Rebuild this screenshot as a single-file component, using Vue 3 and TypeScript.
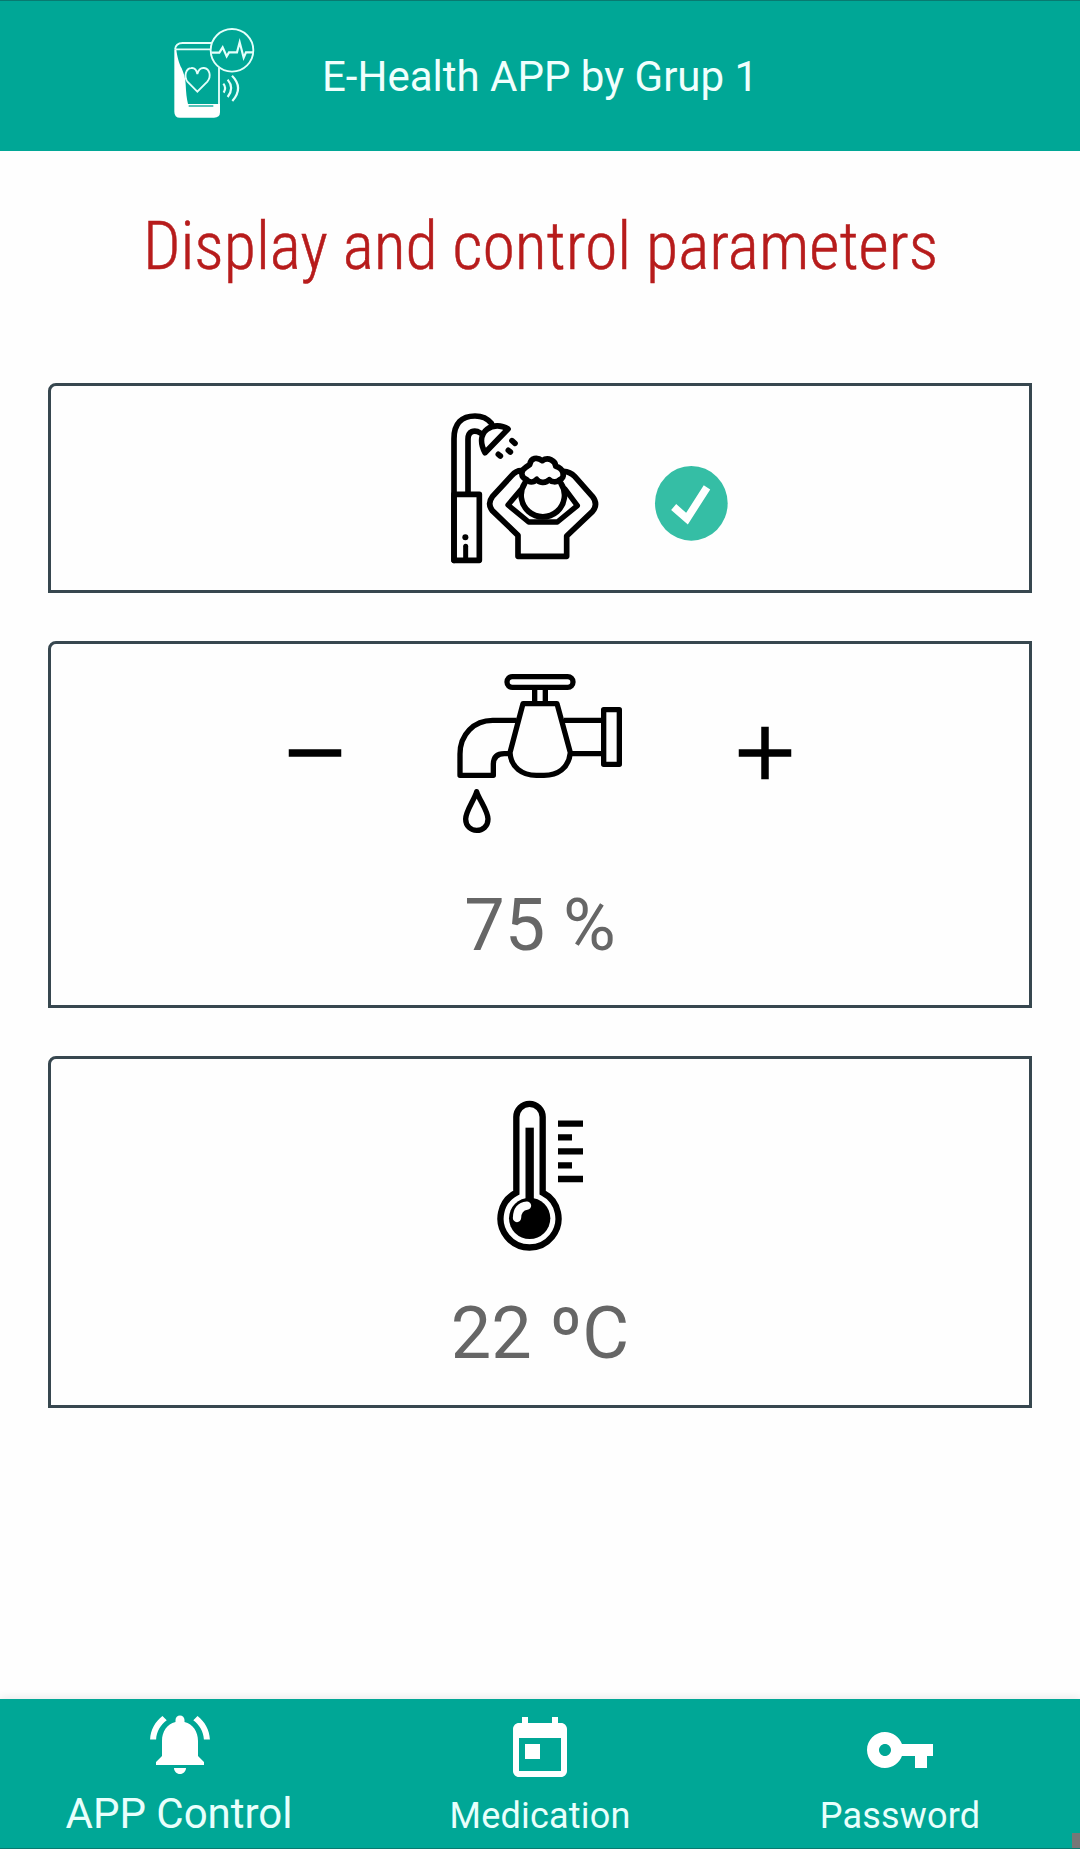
<script setup lang="ts">
import { ref } from 'vue'

interface NavItem {
  id: string
  label: string
  path: string
}

const navItems: NavItem[] = [
  {
    id: 'control',
    label: 'APP Control',
    path: 'M7.58 4.08L6.15 2.65C3.75 4.48 2.17 7.3 2.03 10.5h2c.15-2.65 1.51-4.97 3.55-6.42zm12.39 6.42h2c-.15-3.2-1.73-6.02-4.12-7.85l-1.42 1.43c2.02 1.45 3.39 3.77 3.54 6.42zM18 11c0-3.07-1.64-5.64-4.5-6.32V4c0-.83-.67-1.5-1.5-1.5s-1.5.67-1.5 1.5v.68C7.63 5.36 6 7.92 6 11v5l-2 2v1h16v-1l-2-2v-5zm-6 11c1.1 0 2-.9 2-2h-4c0 1.1.89 2 2 2z',
  },
  {
    id: 'medication',
    label: 'Medication',
    path: 'M19 3h-1V1h-2v2H8V1H6v2H5c-1.11 0-1.99.9-1.99 2L3 19c0 1.1.89 2 2 2h14c1.1 0 2-.9 2-2V5c0-1.1-.9-2-2-2zm0 16H5V8h14v11zM7 10h5v5H7z',
  },
  {
    id: 'password',
    label: 'Password',
    path: 'M12.65 10C11.83 7.67 9.61 6 7 6c-3.31 0-6 2.69-6 6s2.69 6 6 6c2.61 0 4.83-1.67 5.65-4H17v4h4v-4h2v-4H12.65zM7 14c-1.1 0-2-.9-2-2s.9-2 2-2 2 .9 2 2-.9 2-2 2z',
  },
]

const active = ref('control')
const waterLevel = ref(75)
const temperature = ref(22)

function changeWater(step: number): void {
  waterLevel.value = Math.min(100, Math.max(0, waterLevel.value + step))
}
</script>

<template>
  <div class="app">
    <header class="bar">
      <svg class="logo" viewBox="39 36 246 276" fill="none" stroke="#e4fffb" stroke-width="5.5">
        <path d="M45 104 C46 91 54 84 68 84 H156 M46 103 H151 M177 157 V268" />
        <path d="M43 104 H49 C51 122 57 145 65 160 C71 175 76 188 77 208 C78 232 80 252 84 267 H180 V292 Q180 308 162 308 H60 Q43 308 43 290 Z" fill="#fff" stroke="none" />
        <path d="M86 273 H160" stroke="#00a796" stroke-width="4" />
        <path d="M112 230 L83 201 C70 184 78 160 94 159 C104 158 110 166 112 177 C115 165 122 158 132 159 C149 161 155 184 142 200 Z" />
        <circle cx="216" cy="106" r="64" />
        <path d="M154 113 H178 L188 97 L200 124 L207 112 H231 L239 82 L251 128 L258 112 H280" stroke-width="6.5" />
        <path d="M190 206 Q200 218 191 233 M203 194 Q224 219 203 246 M216 182 Q252 218 217 258" stroke-width="6.5" />
      </svg>
      <span class="app-name">E-Health APP by Grup 1</span>
    </header>

    <main class="content">
      <h1 class="title">Display and control parameters</h1>

      <section class="card shower">
        <svg class="shower-icon" viewBox="60 50 450 456" fill="none" stroke="#000" stroke-width="17" stroke-linejoin="round" stroke-linecap="round">
          <path d="M72 495 V130 C72 84 96 62 135 62 C157 62 173 70 184 84 M114 294 V132 C114 108 133 101 151 113" />
          <path d="M165 172 L234 101 C194 75 130 105 165 172 Z M72 297 H148 V495 H72 Z" />
          <path d="M107 453 V490" stroke-width="15" />
          <path d="M106 426 h.1" stroke-width="18" />
          <path d="M246 136 L255 144 M235 165 L241 170 M205 177 L211 182" stroke-width="17" />
          <path d="M275 226 C260 225 253 232 245 241 L187 304 Q171 325 187 346 L264 420 V483 H410 V422 L487 349 Q506 327 487 303 L434 243 Q421 229 400 228" />
          <path d="M284 264 A65 65 0 1 0 393 264" />
          <path d="M289 252 C271 246 272 225 286 217 L299 208 C303 187 321 184 337 196 C354 184 377 196 377 213 C402 219 407 248 389 253 C379 263 365 260 358 253 C346 266 327 262 320 252 C310 263 297 262 289 252 Z" />
          <path d="M272 284 L234 329 L296 380 H382 L442 331 L405 281" stroke-width="16" />
        </svg>
        <svg class="check-icon" viewBox="672 210 225 231">
          <ellipse cx="784" cy="325" rx="109" ry="112" fill="#35bea5" />
          <path d="M731 336 L771 371 L831 277" fill="none" stroke="#fff" stroke-width="23" />
        </svg>
      </section>

      <section class="card water">
        <div class="water-row">
          <button class="step" type="button" aria-label="Decrease" @click="changeWater(-5)">
            <svg viewBox="0 0 24 24"><path d="M19 13H5v-2h14v2z" /></svg>
          </button>
          <svg class="faucet-icon" viewBox="48 39 501 483" fill="none" stroke="#000" stroke-width="16" stroke-linejoin="round">
            <rect x="201" y="50" width="198" height="32" rx="16" />
            <path d="M284 86 V128 M316 86 V128 M249 131 H351 L391 278 C386 326 352 346 312 346 H289 C246 346 213 322 210 278 Z" />
            <path d="M230 181 H158 C102 181 60 223 60 282 V346 H160 V314 Q160 281 193 281 H210 M372 181 H488 M394 281 H488 M491 149 H538 V313 H491 Z" />
            <path d="M110 395 C104 418 77 453 77 477 C77 499 93 511 110 511 C128 511 144 499 144 477 C144 453 117 418 110 395 Z" />
          </svg>
          <button class="step" type="button" aria-label="Increase" @click="changeWater(5)">
            <svg viewBox="0 0 24 24"><path d="M19 13h-6v6h-2v-6H5v-2h6V5h2v6h6v2z" /></svg>
          </button>
        </div>
        <p class="value">{{ waterLevel }} %</p>
      </section>

      <section class="card temperature">
        <svg class="thermo-icon" viewBox="171 30 261 456" fill="none" stroke="#000">
          <path d="M229 308 V81 A39.5 39.5 0 0 1 308 81 V308 A87 87 0 1 1 229 308 Z" stroke-width="19" />
          <path d="M269 113 V340" stroke-width="25" />
          <circle cx="269" cy="385" r="62" fill="#000" stroke="none" />
          <path d="M231 384 Q232 350 261 347" stroke="#fff" stroke-width="25" stroke-linecap="round" />
          <path d="M354 101 H429 M354 142 H396 M354 184 H429 M354 226 H396 M354 267 H429" stroke-width="19" />
        </svg>
        <p class="value">{{ temperature }} ºC</p>
      </section>
    </main>

    <nav class="tabs">
      <a v-for="item in navItems" :key="item.id" class="tab" :class="{ active: item.id === active }" @click="active = item.id">
        <svg class="tab-icon" viewBox="0 0 24 24"><path :d="item.path" /></svg>
        <span class="tab-label">{{ item.label }}</span>
      </a>
      <i class="corner"></i>
    </nav>
  </div>
</template>

<style>
body {
  margin: 0;
  background: #fefefe;
}
</style>

<style scoped>
.app {
  display: flex;
  flex-direction: column;
  width: 1080px;
  height: 1849px;
  overflow: hidden;
  background: #fefefe;
  font-family: Roboto, "Liberation Sans", sans-serif;
}
svg {
  display: block;
  flex: none;
}
.bar {
  box-sizing: border-box;
  display: flex;
  flex: none;
  align-items: flex-start;
  height: 151px;
  padding: 26px 0 0 173px;
  background: #00a796;
  border-top: 1px solid #087a70;
}
.logo {
  width: 82px;
  height: 92px;
}
.app-name {
  margin: 25px 0 0 67px;
  color: #f0fffd;
  font-size: 42px;
  line-height: 49px;
  white-space: nowrap;
}
.content {
  display: flex;
  flex: 1;
  flex-direction: column;
  padding: 0 48px;
}
.title {
  height: 77px;
  margin: 57px -1px 98px 0;
  color: #b71c1c;
  font-family: "Roboto Condensed", Roboto, sans-serif;
  font-size: 66px;
  font-stretch: 75%;
  font-weight: 300;
  letter-spacing: -0.04px;
  line-height: 77px;
  text-align: center;
  white-space: nowrap;
  -webkit-text-stroke: 0.5px #b71c1c;
}
.card {
  box-sizing: border-box;
  display: flex;
  flex: none;
  border: 3px solid #37474f;
  border-radius: 8px 0 0 0;
  background: #fefefe;
}
.card + .card {
  margin-top: 48px;
}
.shower {
  height: 210px;
  padding: 26px 0 0 399px;
}
.shower-icon {
  width: 150px;
  height: 152px;
}
.check-icon {
  width: 75px;
  height: 77px;
  margin: 53px 0 0 54px;
}
.water {
  flex-direction: column;
  align-items: center;
  height: 367px;
  padding-top: 29px;
}
.water-row {
  display: flex;
  justify-content: space-between;
  width: 540px;
}
.step {
  width: 90px;
  height: 90px;
  margin-top: 35px;
  padding: 0;
  border: 0;
  background: none;
}
.faucet-icon {
  width: 167px;
  height: 161px;
  margin-right: 2px;
}
.value {
  margin: 0;
  color: #666;
  font-size: 72px;
  line-height: 84px;
}
.water .value {
  margin-top: 50px;
}
.temperature {
  flex-direction: column;
  align-items: center;
  height: 352px;
  padding-top: 41px;
}
.thermo-icon {
  width: 87px;
  height: 152px;
}
.temperature .value {
  margin-top: 40px;
}
.tabs {
  box-sizing: border-box;
  position: relative;
  display: flex;
  flex: none;
  height: 150px;
  background: #00a796;
  border-bottom: 1px solid #087a70;
  box-shadow: 0 -2px 8px rgba(0, 0, 0, 0.08);
}
.tab {
  display: flex;
  flex: 1;
  flex-direction: column;
  align-items: center;
  padding-top: 15px;
}
.tab.active {
  padding-top: 9px;
}
.tab-icon {
  width: 72px;
  height: 72px;
  fill: #fff;
}
.tab-label {
  margin-top: 9px;
  color: #e8fffc;
  font-size: 36px;
  letter-spacing: 0.2px;
  line-height: 42px;
  white-space: nowrap;
}
.active .tab-label {
  margin-left: -2px;
  font-size: 42px;
  letter-spacing: 0;
  line-height: 49px;
}
.corner {
  position: absolute;
  right: 0;
  bottom: 0;
  width: 8px;
  height: 15px;
  background: #777;
}
</style>
